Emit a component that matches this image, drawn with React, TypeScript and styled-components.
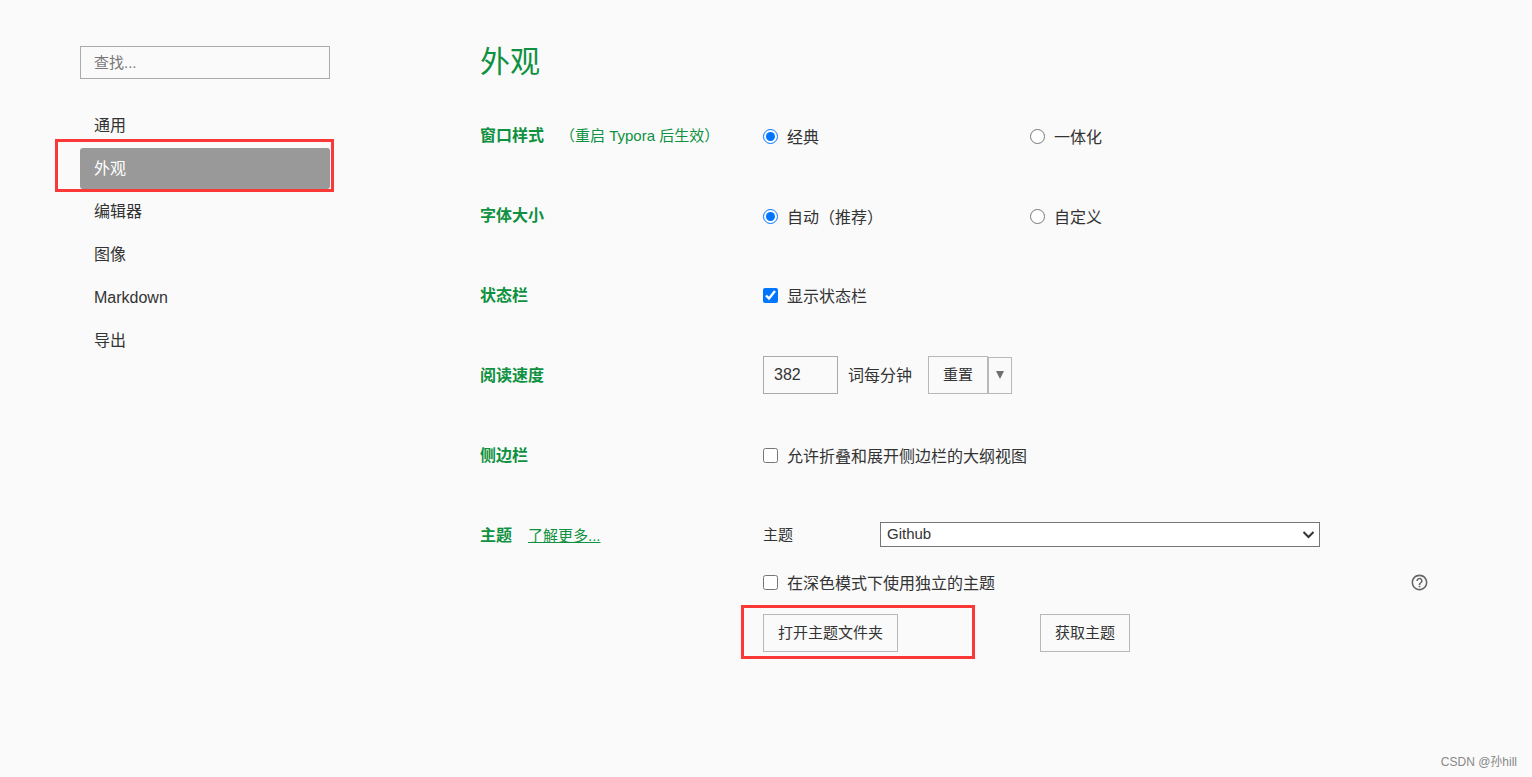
import React, { useState } from "react";
import styled, { createGlobalStyle } from "styled-components";
import { MdHelpOutline } from "react-icons/md";

const GlobalStyle = createGlobalStyle`
  *, *::before, *::after { box-sizing: border-box; }
  body {
    margin: 0;
    background: #fafafa;
    color: #333;
    font-family: "Liberation Sans", "Noto Sans CJK SC", sans-serif;
    font-size: 16px;
    line-height: 24px;
  }
  button, input, select { font-family: inherit; color: inherit; }
`;

const green = "#0e9140";

const Page = styled.div`
  position: relative;
  display: flex;
  gap: 150px;
  min-height: 100vh;
  padding: 42px 100px 42px 80px;
`;

const Sidebar = styled.aside`
  flex: 0 0 250px;
  padding-top: 4px;
`;

const Search = styled.input`
  display: block;
  width: 100%;
  height: 33px;
  padding: 0 13px;
  border: 1px solid #aaa;
  border-radius: 0;
  background: transparent;
  font-size: 15px;
  &::placeholder { color: #777; }
`;

const Nav = styled.nav`
  display: flex;
  flex-direction: column;
  gap: 2px;
  margin-top: 26px;
`;

const NavItem = styled.div`
  position: relative;
`;

const NavLink = styled.a<{ $active: boolean }>`
  display: block;
  padding: 1px 14px 0;
  border-radius: 3px;
  line-height: 40px;
  text-decoration: none;
  color: ${(p) => (p.$active ? "#fff" : "#333")};
  background: ${(p) => (p.$active ? "#999" : "transparent")};
`;

const Marker = styled.span<{ $inset: string }>`
  position: absolute;
  inset: ${(p) => p.$inset};
  border: 3px solid #fb3838;
  pointer-events: none;
`;

const Main = styled.main`
  flex: 1;
  min-width: 0;
`;

const Title = styled.h1`
  margin: 0 0 33px;
  color: ${green};
  font-size: 30px;
  font-weight: 400;
  line-height: 40px;
`;

const Row = styled.section`
  display: grid;
  grid-template-columns: 283px minmax(0, 1fr);
  margin-bottom: 40px;
`;

const RowHead = styled.div`
  display: flex;
  align-items: center;
  gap: 16px;
  height: 40px;
  padding-top: 2px;
  color: ${green};
`;

const RowTitle = styled.h2`
  margin: 0;
  font-size: 16px;
  font-weight: 700;
`;

const Note = styled.span`
  font-size: 15px;
  white-space: nowrap;
`;

const MoreLink = styled.a`
  color: ${green};
  font-size: 15px;
`;

const Options = styled.div`
  display: grid;
  grid-template-columns: 267px 1fr;
  align-items: center;
  height: 40px;
  padding-top: 2px;
`;

const Line = styled.div`
  display: flex;
  align-items: center;
  min-height: 40px;
`;

const ThemeLine = styled(Line)`
  padding-bottom: 2px;
`;

const Choice = styled.label`
  display: flex;
  align-items: center;
  gap: 9px;
  white-space: nowrap;
  span { padding-top: 4px; }
`;

const Tick = styled.input`
  flex: none;
  width: 15px;
  height: 15px;
  margin: 0;
  accent-color: #0075ff;
`;

const SpeedLabel = styled.label`
  display: flex;
  align-items: center;
  gap: 10px;
  margin-right: 16px;
  span { padding-top: 2px; }
`;

const SpeedInput = styled.input`
  width: 75px;
  height: 38px;
  padding: 0 10px;
  border: 1px solid #aaa;
  border-radius: 0;
  background: transparent;
  font-size: 16px;
`;

const ButtonGroup = styled.div`
  display: flex;
  align-items: flex-end;
`;

const Button = styled.button`
  height: 38px;
  padding: 0 14px 4px;
  border: 1px solid #b8b8b8;
  border-radius: 0;
  background: transparent;
  font-size: 15px;
  white-space: nowrap;
`;

const CaretButton = styled(Button)`
  display: flex;
  align-items: center;
  justify-content: center;
  width: 24px;
  height: 37px;
  padding: 0 1px 2px 0;
  color: #707070;
`;

const ThemeLabel = styled.label`
  flex: 0 0 117px;
  padding-top: 1px;
  font-size: 15px;
`;

const SelectBox = styled.div`
  position: relative;
  display: flex;
  flex: 1;
  min-width: 0;
  margin-right: 112px;
  svg {
    position: absolute;
    right: 5px;
    top: 8px;
    pointer-events: none;
  }
`;

const Select = styled.select`
  appearance: none;
  width: 100%;
  height: 25px;
  padding: 0 24px 2px 6px;
  border: 1px solid #767676;
  border-radius: 0;
  background-color: #fff;
  font-size: 15px;
`;

const DarkLine = styled.div`
  display: flex;
  align-items: center;
  justify-content: space-between;
  height: 24px;
  margin: 15px 3px 20px 0;
`;

const HelpButton = styled.button`
  display: flex;
  padding: 0;
  border: 0;
  background: none;
  color: #666;
`;

const ButtonLine = styled.div`
  display: grid;
  grid-template-columns: 277px 1fr;
  justify-items: start;
`;

const Marked = styled.div`
  position: relative;
`;

const Watermark = styled.div`
  position: absolute;
  right: 15px;
  bottom: 6px;
  color: #888;
  font-size: 12px;
  line-height: 18px;
`;

const sections = ["通用", "外观", "编辑器", "图像", "Markdown", "导出"];

interface OptionProps {
  type: "radio" | "checkbox";
  name: string;
  text: string;
  checked?: boolean;
}

function Option({ type, name, text, checked }: OptionProps) {
  return (
    <Choice>
      <Tick type={type} name={name} defaultChecked={checked} />
      <span>{text}</span>
    </Choice>
  );
}

export default function App() {
  const [active, setActive] = useState("外观");
  return (
    <>
      <GlobalStyle />
      <Page>
        <Sidebar>
          <Search type="text" placeholder="查找..." aria-label="查找" />
          <Nav>
            {sections.map((name) => (
              <NavItem key={name}>
                <NavLink href="#" $active={name === active} onClick={() => setActive(name)}>
                  {name}
                </NavLink>
                {name === "外观" && <Marker $inset="-9px -4px -3px -25px" />}
              </NavItem>
            ))}
          </Nav>
        </Sidebar>

        <Main>
          <Title>外观</Title>

          <Row>
            <RowHead>
              <RowTitle>窗口样式</RowTitle>
              <Note>（重启 Typora 后生效）</Note>
            </RowHead>
            <Options>
              <Option type="radio" name="window" text="经典" checked />
              <Option type="radio" name="window" text="一体化" />
            </Options>
          </Row>

          <Row>
            <RowHead>
              <RowTitle>字体大小</RowTitle>
            </RowHead>
            <Options>
              <Option type="radio" name="font" text="自动（推荐）" checked />
              <Option type="radio" name="font" text="自定义" />
            </Options>
          </Row>

          <Row>
            <RowHead>
              <RowTitle>状态栏</RowTitle>
            </RowHead>
            <Line>
              <Option type="checkbox" name="status" text="显示状态栏" checked />
            </Line>
          </Row>

          <Row>
            <RowHead>
              <RowTitle>阅读速度</RowTitle>
            </RowHead>
            <Line>
              <SpeedLabel>
                <SpeedInput type="text" defaultValue="382" />
                <span>词每分钟</span>
              </SpeedLabel>
              <ButtonGroup>
                <Button type="button">重置</Button>
                <CaretButton type="button" aria-label="更多">
                  <svg width="10" height="8" viewBox="0 0 10 8" aria-hidden="true">
                    <path d="M1 0h8L5 8z" fill="currentColor" />
                  </svg>
                </CaretButton>
              </ButtonGroup>
            </Line>
          </Row>

          <Row>
            <RowHead>
              <RowTitle>侧边栏</RowTitle>
            </RowHead>
            <Line>
              <Option type="checkbox" name="outline" text="允许折叠和展开侧边栏的大纲视图" />
            </Line>
          </Row>

          <Row>
            <RowHead>
              <RowTitle>主题</RowTitle>
              <MoreLink href="#">了解更多...</MoreLink>
            </RowHead>
            <div>
              <ThemeLine>
                <ThemeLabel htmlFor="theme">主题</ThemeLabel>
                <SelectBox>
                  <Select id="theme" defaultValue="Github">
                    <option>Github</option>
                  </Select>
                  <svg width="13" height="10" viewBox="0 0 13 10" aria-hidden="true">
                    <path d="M1.5 2l5 5 5-5" fill="none" stroke="#333" strokeWidth="2" />
                  </svg>
                </SelectBox>
              </ThemeLine>
              <DarkLine>
                <Option type="checkbox" name="dark" text="在深色模式下使用独立的主题" />
                <HelpButton type="button" aria-label="帮助">
                  <MdHelpOutline size={19} />
                </HelpButton>
              </DarkLine>
              <ButtonLine>
                <Marked>
                  <Button type="button">打开主题文件夹</Button>
                  <Marker $inset="-9px -77px -7px -22px" />
                </Marked>
                <Button type="button">获取主题</Button>
              </ButtonLine>
            </div>
          </Row>
        </Main>
        <Watermark>CSDN @孙hill</Watermark>
      </Page>
    </>
  );
}
